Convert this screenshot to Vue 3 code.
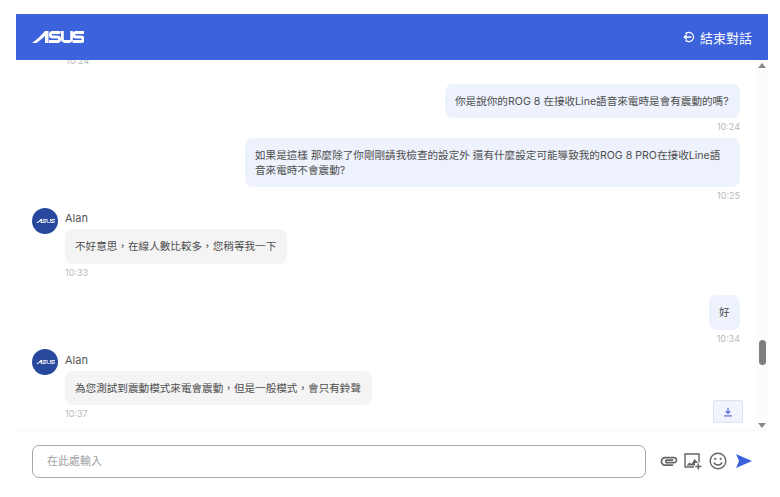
<script setup>
const c = '\uFF0C'
const msgs = [
  { id: 1, me: true, text: '你是說你的ROG 8 在接收Line語音來電時是會有震動的嗎?', time: '10:24', cls: 'm1' },
  { id: 2, me: true, text: '如果是這樣 那麼除了你剛剛請我檢查的設定外 還有什麼設定可能導致我的ROG 8 PRO在接收Line語音來電時不會震動?', time: '10:25', cls: 'm2' },
  { id: 3, me: false, name: 'Alan', text: `不好意思${c}在線人數比較多${c}您稍等我一下`, time: '10:33', cls: 'm3' },
  { id: 4, me: true, text: '好', time: '10:34', cls: 'm4' },
  { id: 5, me: false, name: 'Alan', text: `為您測試到震動模式來電會震動${c}但是一般模式${c}會只有鈴聲`, time: '10:37', cls: 'm5' },
]
const logoFill = 'M0 11 C5 8 9 4 13 0 H16.5 V11 H13 V4.5 C10 7 7 9 4.5 11 Z'
const logoStroke = 'M28.5 1.3 H20.5 C17.6 1.3 17.6 5.5 20.5 5.5 H25.5 C28.4 5.5 28.4 9.7 25.5 9.7 H17 M30.4 0 V7.2 C30.4 9.7 32 9.7 34 9.7 H36 C38 9.7 39.6 9.7 39.6 7.2 V0 M52 1.3 H44 C41.1 1.3 41.1 5.5 44 5.5 H49 C51.9 5.5 51.9 9.7 49 9.7 H40.6'
</script>

<template>
  <div class="page">
    <div class="frame">
      <header class="head">
        <svg class="logo" viewBox="0 0 52 11" width="52" height="12" preserveAspectRatio="none">
          <path :d="logoFill" fill="#fff"/>
          <path :d="logoStroke" fill="none" stroke="#fff" stroke-width="2.7"/>
        </svg>
        <div class="end">
          <svg viewBox="0 0 12 12" width="12" height="12" fill="none" stroke="#fff" stroke-width="1.35" stroke-linecap="round" stroke-linejoin="round">
            <path d="M3 2.4 A4.6 4.6 0 1 1 3 9.6"/>
            <path d="M1.2 6 H8 M3.4 3.9 L1.2 6 L3.4 8.1"/>
          </svg>
          <span>結束對話</span>
        </div>
      </header>

      <div class="body">
        <main class="list">
          <div class="clip-time">10:24</div>
          <section v-for="m in msgs" :key="m.id" class="msg" :class="[m.cls, m.me ? 'me' : 'them']">
            <div v-if="!m.me" class="who">
              <span class="avatar">
                <svg viewBox="0 0 52 11" width="19" height="4">
                  <path :d="logoFill" fill="#fff"/>
                  <path :d="logoStroke" fill="none" stroke="#fff" stroke-width="2.4"/>
                </svg>
              </span>
              <span class="name">{{ m.name }}</span>
            </div>
            <div class="bubble">{{ m.text }}</div>
            <div class="time">{{ m.time }}</div>
          </section>

          <button class="down" type="button" aria-label="scroll to bottom">
            <svg viewBox="0 0 10 10" width="10" height="10" fill="none" stroke="#5f74de" stroke-width="1.3">
              <path d="M5 .8 V6.2 M2.6 4 L5 6.4 L7.4 4"/>
              <path d="M1.2 8.9 H8.8"/>
            </svg>
          </button>
        </main>

        <aside class="scrollbar">
          <i class="arrow up"></i>
          <i class="thumb"></i>
          <i class="arrow dn"></i>
        </aside>
      </div>

      <footer class="foot">
        <div class="input">在此處輸入</div>
        <div class="tools">
          <svg class="clip" viewBox="0 0 24 24" width="20" height="20" fill="#666">
            <path d="M2 12.5C2 9.46 4.46 7 7.5 7H18c2.21 0 4 1.79 4 4s-1.79 4-4 4H9.5C8.12 15 7 13.88 7 12.5S8.12 10 9.5 10H17v2H9.41c-.55 0-.55 1 0 1H18c1.1 0 2-.9 2-2s-.9-2-2-2H7.5C5.57 9 4 10.57 4 12.5S5.57 16 7.5 16H17v2H7.5C4.46 18 2 15.54 2 12.5z"/>
          </svg>
          <svg viewBox="0 0 18 17" width="18" height="17" fill="none" stroke="#666" stroke-width="1.4">
            <path d="M10 14 H1 V1 H15 V9.5"/>
            <path d="M2.5 12.6 L5.5 9.5 L7.5 11 L10.5 6 L13.5 9 V10 H11 V12.6 Z" fill="#666" stroke="none"/>
            <path d="M14.3 10.5 V16.5 M11.3 13.5 H17.5" stroke-width="1.5"/>
          </svg>
          <svg viewBox="0 0 18 18" width="18" height="18" fill="none" stroke="#666" stroke-width="1.4" stroke-linecap="round">
            <circle cx="9" cy="9" r="7.8"/>
            <path d="M5.2 10.8 C6.4 13.8 11.6 13.8 12.8 10.8"/>
            <circle cx="6.3" cy="6.9" r="1.1" fill="#666" stroke="none"/>
            <circle cx="11.7" cy="6.9" r="1.1" fill="#666" stroke="none"/>
          </svg>
          <svg class="send" viewBox="0 0 16 14" width="16" height="14" fill="#3b62dc">
            <path d="M0 0 L16 7 L0 14 L3 7 Z"/>
          </svg>
        </div>
      </footer>
    </div>
  </div>
</template>

<style>
html, body { margin: 0; background: #fff; }
</style>

<style scoped>
.page {
  width: 780px;
  height: 497px;
  padding: 14px 12px 0 16px;
  box-sizing: border-box;
  overflow: hidden;
  background: #fff;
  font-family: Inter, "Noto Sans CJK TC", sans-serif;
}
.frame { width: 752px; display: flex; flex-direction: column; }
.head {
  height: 46px;
  background: #3c62dc;
  display: flex;
  align-items: center;
  justify-content: space-between;
  padding: 0 16px;
  flex: none;
}
.logo { display: block; }
.end { display: flex; align-items: center; gap: 5px; color: #fff; font-size: 13px; }
.body { display: flex; height: 370px; flex: none; }
.list {
  position: relative;
  width: 740px;
  overflow: hidden;
  flex: none;
}
.clip-time {
  position: absolute;
  left: 50px;
  top: -4px;
  font-size: 9px;
  line-height: 10px;
  color: #b8b8b8;
}
.msg { display: flex; flex-direction: column; font-size: 10.6px; }
.me { align-items: flex-end; padding-right: 16px; }
.them { align-items: flex-start; padding-left: 49px; }
.bubble {
  box-sizing: border-box;
  padding: 10px;
  line-height: 15px;
  color: #4f4f4f;
  border-radius: 8px;
}
.me .bubble { background: #edf2fc; }
.them .bubble { background: #f4f4f4; }
.m1 { margin-top: 24px; }
.m2 { margin-top: 6px; }
.m3 { margin-top: 7px; }
.m4 { margin-top: 17px; }
.m5 { margin-top: 5px; }
.m5 .who { height: 22px; }
.m1 .bubble { width: 295px; height: 34px; }
.m2 .bubble { width: 495px; height: 49px; }
.m3 .bubble { width: 222px; height: 35px; }
.m4 .bubble { width: 31px; height: 35px; }
.m5 .bubble { width: 307px; height: 34px; }
.time {
  font-size: 9px;
  line-height: 10px;
  color: #b8b8b8;
  margin-top: 4px;
}
.who {
  position: relative;
  height: 21px;
  display: flex;
  align-items: center;
}
.avatar {
  position: absolute;
  left: -33px;
  top: 0;
  width: 26px;
  height: 26px;
  border-radius: 50%;
  background: #27489c;
  display: flex;
  align-items: center;
  justify-content: center;
}
.name { font-size: 11px; color: #555; line-height: 21px; }
.down {
  position: absolute;
  left: 697px;
  top: 340px;
  width: 30px;
  height: 23px;
  padding: 0;
  background: #f0f4fc;
  border: 1px solid #dde3ef;
  border-radius: 2px;
  display: flex;
  align-items: center;
  justify-content: center;
}
.scrollbar {
  width: 12px;
  background: #fcfcfc;
  position: relative;
  flex: none;
}
.arrow {
  position: absolute;
  left: 2px;
  width: 0;
  height: 0;
  border-left: 4px solid transparent;
  border-right: 4px solid transparent;
}
.up { top: 3px; border-bottom: 5px solid #8a8a8a; }
.dn { bottom: 2px; border-top: 5px solid #8a8a8a; }
.thumb {
  position: absolute;
  left: 3px;
  top: 280px;
  width: 7px;
  height: 25px;
  border-radius: 4px;
  background: #7f7f7f;
}
.foot {
  display: flex;
  align-items: center;
  height: 67px;
  border-top: 1px solid #f7f7f7;
  box-sizing: border-box;
  padding: 0 16px 6px;
}
.input {
  box-sizing: border-box;
  width: 614px;
  height: 33px;
  line-height: 31px;
  border: 1px solid #a6a6a6;
  border-radius: 7px;
  padding-left: 14px;
  color: #a0a0a0;
  font-size: 11px;
}
.tools { display: flex; align-items: center; gap: 7px; margin-left: 14px; }
.clip { margin: 0 -2px 0 -1px; }
.send { margin-left: 2px; }
</style>
